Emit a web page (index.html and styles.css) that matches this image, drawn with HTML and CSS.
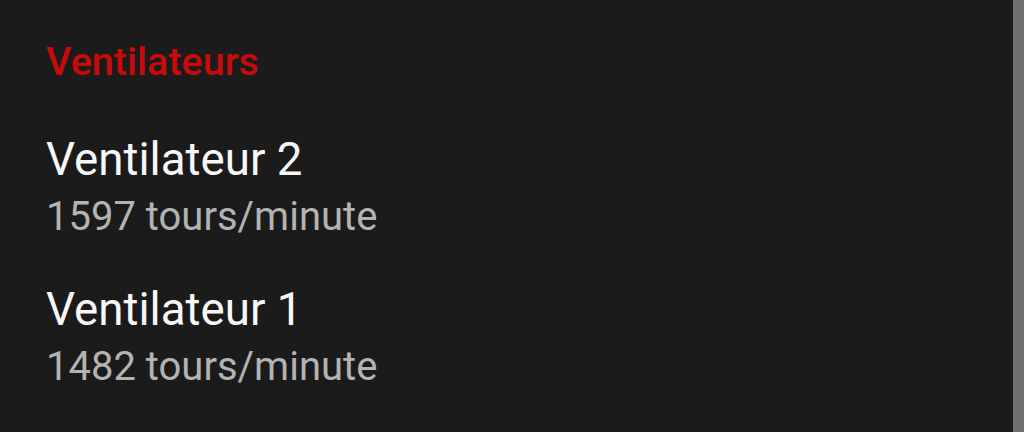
FILE: index.html
```html
<!DOCTYPE html>
<html lang="fr">
<head>
    <meta charset="UTF-8">
    <meta name="viewport" content="width=device-width, initial-scale=1.0">
    <title>Ventilateurs</title>
    <link rel="stylesheet" href="styles.css">
</head>
<body>
    <div class="screen">
        <div class="content">
            <div class="category">Ventilateurs</div>
            <div class="item">
                <div class="item-title">Ventilateur 2</div>
                <div class="item-summary">1597 tours/minute</div>
            </div>
            <div class="item">
                <div class="item-title">Ventilateur 1</div>
                <div class="item-summary">1482 tours/minute</div>
            </div>
        </div>
        <div class="scrollbar"></div>
    </div>
</body>
</html>
```

FILE: styles.css
```css
html, body {
    margin: 0;
    padding: 0;
    height: 100%;
}
body {
    font-family: Roboto, "Noto Sans", sans-serif;
    background-color: #1b1b1b;
    overflow: hidden;
}
.screen {
    display: flex;
    height: 432px;
}
.content {
    flex: 1;
    padding: 37px 0 0 46px;
}
.category {
    color: #c80a0a;
    font-size: 39.5px;
    font-weight: 500;
    line-height: 50px;
    margin-bottom: 25px;
}
.item {
    padding: 17px 0;
}
.item-title {
    color: #f7f7f7;
    font-size: 45.7px;
    line-height: 56px;
    padding-top: 3px;
}
.item-summary {
    color: #b3b3b3;
    font-size: 40px;
    line-height: 56px;
    margin-top: 1px;
}
.scrollbar {
    width: 11px;
    background-color: #707070;
}
```
